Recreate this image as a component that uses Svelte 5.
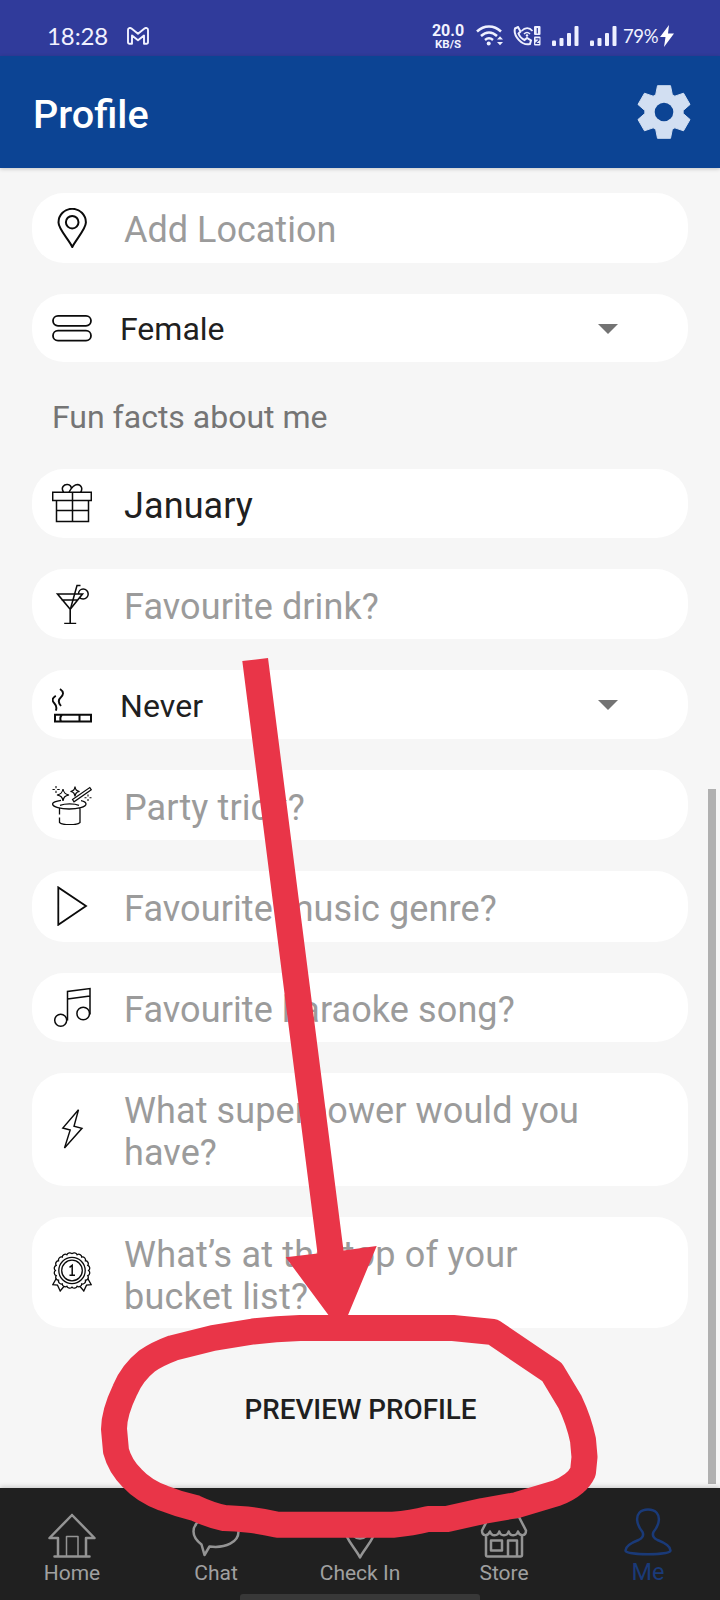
<script>
  const fields = [
    { icon: 'pin', text: 'Add Location', height: 70 },
    { icon: 'bars', text: 'Female', select: true, height: 68 },
  ];
  const facts = [
    { icon: 'gift', text: 'January', filled: true, height: 69 },
    { icon: 'drink', text: 'Favourite drink?', height: 70 },
    { icon: 'smoke', text: 'Never', select: true, height: 69 },
    { icon: 'hat', text: 'Party trick?', height: 70 },
    { icon: 'play', text: 'Favourite music genre?', height: 71 },
    { icon: 'note', text: 'Favourite karaoke song?', height: 69 },
    { icon: 'bolt', text: 'What superpower would you have?', height: 113 },
    { icon: 'medal', text: 'What’s at the top of your bucket list?', height: 111, wide: true },
  ];
  const tabs = ['Home', 'Chat', 'Check In', 'Store', 'Me'];

  const tooth = [[-8.3, -17.3], [-6.5, -26.3], [6.5, -26.3], [8.3, -17.3]];
  const gear = [0, 60, 120, 180, 240, 300]
    .flatMap((deg) => {
      const a = (deg * Math.PI) / 180;
      return tooth.map(([x, y]) => `${(x * Math.cos(a) - y * Math.sin(a)).toFixed(2)},${(x * Math.sin(a) + y * Math.cos(a)).toFixed(2)}`);
    })
    .join(' ');

  // Scalloped rim of the medal
  const rim = (() => {
    let d = '';
    for (let i = 0; i <= 20; i++) {
      const a = (i * 18 * Math.PI) / 180;
      const x = (20 + 16.6 * Math.sin(a)).toFixed(2);
      const y = (18.5 - 16.6 * Math.cos(a)).toFixed(2);
      d += i ? `A3 3 0 0 1 ${x} ${y}` : `M${x} ${y}`;
    }
    return d;
  })();
</script>

{#snippet fieldIcon(name)}
  <svg class="icon" viewBox="0 0 40 40" width="40" height="40">
    {#if name === 'pin'}
      <path stroke-width="2" d="M20.3 39C17 32 6.500 21 6.500 14.500a13.700 13.700 0 0 1 27.400 0C33.900 21 23.500 32 20.300 39z" /><circle stroke-width="2" cx="20.200" cy="14.200" r="6.300" />
    {:else if name === 'bars'}
      <rect stroke-width="1.800" x="1" y="7.800" width="38" height="10" rx="5" /><rect stroke-width="1.800" x="1" y="22.700" width="38" height="10" rx="5" />
    {:else if name === 'gift'}
      <path d="M.7 9.300h38.600v8.200H.7zM4.500 17.500V38.500h32V17.500M20.500 9.300v29.200M4.500 27.500h32M11.500 9C8.500 4.500 12 1.200 15.500 1.500c2.500.3 3.800 2 3.800 4M17 9c2-3.500 5.500-7.500 8.500-7.500 4 .2 5.500 4.500 3 7.800" />
    {:else if name === 'drink'}
      <path d="M5.500 10h25L18.200 25.300zM9.500 16h16.500M18.200 25.300V39.500M12.200 39.500h12" stroke-width="1.600" /><path d="M18.700 24L25 1.500h3.500" stroke-width="1.500" /><path d="M26.500 10c0-2.800 2-5 4.700-5a5 5 0 0 1 0 10c-1.700 0-2.900-.5-3.700-1.500" stroke-width="1.500" />
    {:else if name === 'smoke'}
      <path stroke-width="2" d="M3 30.800h36v6.700H3zM10 30.800c-2 2-2 4.500-1 6.700M27.500 30.800v6.700" /><path d="M3.800 11.700C-.5 14.500 0 17 2.500 19.500c2.300 2.500 2.200 5 1.300 7.200M8 5c4.500 3 3.300 6 .7 8.500-3 2.700-2.300 5.500.3 8.500" stroke-width="1.900" />
    {:else if name === 'hat'}
      <path d="M9 15.300c-5 .7-8.700 2.200-8.400 3.900.4 2.900 8 4.800 16.500 4.800S34 22 34 19c0-1.500-2-2.600-5-3.300M8 20.300c5-2 14.500-2 19 0M7.500 23.500v6M7.500 32.500V37.500c3 3 17.500 3 20.500 0V23.500" stroke-width="1.300" />
      <path d="M11 4c.7 4 2 5.300 6 6-4 .8-5.300 2-6 6-.7-4-2-5.200-6-6 4-.7 5.300-2 6-6zM23 1.500c.5 3.400 1.400 4.200 4.500 5-3.100.8-4 1.600-4.500 5-.5-3.400-1.400-4.200-4.500-5 3.100-.8 4-1.600 4.500-5z" stroke-width="1.200" /><path fill="#fff" d="M20.500 14.500L37.800 2.500l1.500 2.300L22 16.800z" stroke-width="1.200" />
      <path d="M4 1v2.200M4 5.800V8M.5 4.500H2.800M5.200 4.500h2.500M36 9.500v2M36 14v2M32.500 12.800h2M37.500 12.800h2" stroke-width="1.100" />
    {:else if name === 'play'}
      <path stroke-width="1.800" d="M6.300 1.400v37.400L34 20z" />
    {:else if name === 'note'}
      <path d="M15.500 33.500V4.500l22.500-3v26M15.500 12l22.500-3" /><circle cx="8.700" cy="33.200" r="6" /><circle cx="31.200" cy="26.500" r="6.300" />
    {:else if name === 'bolt'}
      <path stroke-width="1.400" d="M26.500.8L10.800 19l7.400 2L12.500 39 30 19.300l-8-2z" />
    {:else if name === 'medal'}
      <path d="M4.500 26L.8 32.700l4.700.5 2.700 5.800L14 32M35.500 26l3.700 6.700-4.700.5-2.700 5.800L26 32" stroke-width="1.300" />
      <path d={rim} fill="#fff" stroke-width="1.300" /><circle cx="20" cy="18.500" r="13.200" stroke-width="1.300" /><circle cx="20" cy="18.500" r="10.300" stroke-width="1.300" />
      <path d="M17.500 15.300l2.700-2V23M17.500 23.200h5.500" stroke-width="1.500" />
    {/if}
  </svg>
{/snippet}

{#snippet field(f)}
  <div class="field" class:select={f.select} class:filled={f.filled} class:wide={f.wide} style:height="{f.height}px">
    {@render fieldIcon(f.icon)}
    <span class="value">{f.text}</span>
    {#if f.select}
      <svg class="caret" width="20" height="10" viewBox="0 0 20 10"><path d="M0 0h20L10 10z" /></svg>
    {/if}
  </div>
{/snippet}

{#snippet signal()}
  <svg width="27" height="21" viewBox="0 0 27 21" fill="#eef0ff"><rect x="0" y="14.500" width="4" height="5.500" rx="1" /><rect x="7.500" y="12" width="4" height="8" rx="1" /><rect x="15" y="7" width="4" height="13" rx="1" /><rect x="22.500" y="0" width="4" height="20" rx="1" /></svg>
{/snippet}

<div class="screen">
  <div class="status">
    <span class="time">18:28</span>
    <svg class="mail" width="22" height="18" viewBox="0 0 22 18"><path d="M1 3v12.500q0 1.200 1.200 1.200H5V8.500l6 4.800 6-4.800v8.200h2.800q1.200 0 1.200-1.200V3c0-2-2-2.600-3.500-1.500L11 6.700 4.500 1.500C3 .4 1 1 1 3z" /></svg>
    <div class="right">
      <div class="speed"><b>20.0</b><b class="unit">KB/S</b></div>
      <svg class="wifi" width="28" height="22" viewBox="0 0 28 22" fill="none" stroke="#eef0ff" stroke-width="2.500"><path d="M1 6.500C8-.2 18-.2 25 6.500M5 11c5-4.600 11-4.600 16 0M9 15c2.600-2.200 5.400-2.200 8 0" /><circle cx="12.700" cy="18.500" r="2" fill="#eef0ff" stroke="none" /><path d="M21 14.500l3-3.300 3 3.300zM21 17l3 3.300 3-3.300z" fill="#eef0ff" stroke="none" /></svg>
      <svg class="call" width="28" height="20" viewBox="0 0 28 20" fill="none" stroke="#eef0ff" stroke-width="2"><path d="M2 2.500l3-1.500 2.500 4.500L5.500 7.500c1 3 3 5 6 6.500l2.500-2 4 2.500-1 3.500c-8 2-17-8-15-15.500z" /><path d="M8.500 5c3.500-3.800 8-3.800 11 0M11 8c2-2 4-2 6 0" stroke-width="1.600" /><circle cx="14" cy="9.500" r="1.200" fill="#eef0ff" stroke="none" /><rect x="21" y="0" width="6.500" height="9" rx="1" fill="#eef0ff" stroke="none" /><rect x="21" y="10.500" width="6.500" height="9" rx="1" fill="#eef0ff" stroke="none" /><path d="M24.300 2v5.500M22.500 12.800h3.400v1.300l-3 2.800v.6h3.300" stroke="#303b98" stroke-width="1.200" /></svg>
      <div class="sig1">{@render signal()}</div>
      <div class="sig2">{@render signal()}</div>
      <span class="battery">79%</span>
      <svg class="charge" width="14" height="22" viewBox="0 0 14 22"><path d="M9 0L0 12h5.500L4 22 14 8.500H8z" fill="#fff" /></svg>
    </div>
  </div>

  <header>
    <h1>Profile</h1>
    <svg class="gear" width="56" height="56" viewBox="-28 -28 56 56">
      <polygon points={gear} fill="#d2dff2" stroke="#d2dff2" stroke-width="1" stroke-linejoin="round" />
      <circle r="9.300" fill="#0c4494" />
    </svg>
  </header>

  <main>
    <div class="stack first">
      {#each fields as f}{@render field(f)}{/each}
    </div>
    <h2>Fun facts about me</h2>
    <div class="stack">
      {#each facts as f}{@render field(f)}{/each}
    </div>
    <button>PREVIEW PROFILE</button>
    <div class="scrollbar"></div>
  </main>

  <nav>
    {#each tabs as tab}
      <div class="tab" class:active={tab === 'Me'}>
        <svg width="48" height="48" viewBox="0 0 48 48">
          {#if tab === 'Home'}
            <path d="M24 3L1.500 26H10v18.500H6.500M24 3l22.500 23H38v18.500h3.500M7 44.500h34" /><path d="M18.500 44V24.500H30V44" stroke-width="1.500" />
          {:else if tab === 'Chat'}
            <path d="M24 4C11 4 1.500 11 1.500 19.500c0 6 3.500 9.500 8 13L12.500 43l5-8.500C34 36.500 46.500 30 46.500 19.500 46.500 11 37 4 24 4z" />
          {:else if tab === 'Check In'}
            <path d="M24 45.500C20 37 8.500 26 8.500 17a15.500 15.500 0 0 1 31 0C39.500 26 28 37 24 45.500z" /><circle cx="24" cy="18" r="8.500" />
          {:else if tab === 'Store'}
            <path d="M9 5h30l7 13.500c0 6-6.500 6-8 1-1.500 5-8 5-9.300 0-1.500 5-8 5-9.400 0-1.500 5-8 5-9.300 0-2 5-8 5-8-1zM6 24v19q0 1.500 1.500 1.500h33q1.500 0 1.500-1.500V24M11 28.500h11v10H11zM28 44V28.500h9V44" />
          {:else}
            <path d="M24 1.500c-8 0-11.500 5-10.800 11 .4 5 2.500 8 5.300 11.500 1.800 4-.5 6.300-4 8C8 34.500 1.500 38 1.500 42.500c0 5 45 5 45 0C46.500 38 40 34.500 33.500 32c-3.500-1.700-5.800-4-4-8 2.800-3.500 4.900-6.500 5.300-11.500.7-6-2.800-11-10.800-11z" />
          {/if}
        </svg>
        <span>{tab}</span>
      </div>
    {/each}
    <div class="handle"></div>
  </nav>

  <svg class="marker" width="720" height="1600" viewBox="0 0 720 1600">
    <path fill="#e93548" d="M242.300 661L268 658 343.500 1250.500 376.700 1246 341 1332 285.700 1257.300 317.500 1253.500z" />
    <path fill="none" stroke="#e93548" stroke-width="26" stroke-linejoin="round" d="M300 1328Q275 1329 253 1331.500L213 1338 173 1348Q157 1354 147 1361Q132 1373 125 1390Q114 1413 114 1429L116 1451Q120 1466 132 1478Q144 1491 163 1498Q178 1504 195 1508Q210 1515 224 1518Q236 1518.500 247 1519.500Q262 1521 277 1524.700H393Q412 1523 428 1519H447L483 1511 517 1505 557 1493Q577 1485 583 1472L584.500 1457 583 1440Q579 1421 570 1402L552 1372 493 1332 453 1328z" />
  </svg>
</div>

<style>
  :global(body) { background: #f6f6f6; }
  .screen { position: relative; width: 720px; height: 1600px; overflow: hidden; display: flex; flex-direction: column; background: #f6f6f6; font-family: Roboto, sans-serif; }
  .status { height: 56px; flex: none; box-sizing: border-box; padding: 16px 46px 0 47px; display: flex; align-items: center; background: #303b9b; color: #f1f2ff; }
  .time { font: 24px/40px Lato, sans-serif; letter-spacing: -.1px; }
  .mail { margin-left: 18.500px; fill: none; stroke: #f1f2ff; stroke-width: 1.900; stroke-linejoin: round; }
  .right { display: flex; align-items: center; margin-left: auto; }
  .speed { display: flex; flex-direction: column; align-items: center; width: 34px; line-height: 15px; font-size: 16px; }
  .unit { font-size: 11.500px; line-height: 12px; }
  .wifi { margin-left: 11px; }
  .call { margin-left: 9px; }
  .sig1 { display: flex; margin-left: 11px; }
  .sig2 { display: flex; margin-left: 11px; }
  .battery { width: 34px; margin-left: 6px; font: 18.500px/24px Lato, sans-serif; letter-spacing: -.4px; white-space: nowrap; }
  .charge { margin-left: 3px; }
  header { height: 112px; flex: none; box-sizing: border-box; padding: 0 28px 0 33px; display: flex; align-items: center; justify-content: space-between; background: #0c4494; box-shadow: 0 1px 4px #0003; }
  h1 { margin: 4px 0 0; color: #fff; font-size: 39.600px; font-weight: 500; }
  main { position: relative; flex: 1; padding: 25px 32px 0; display: flex; flex-direction: column; }
  .stack { display: flex; flex-direction: column; gap: 31px; }
  .field { box-sizing: border-box; flex: none; padding: 0 68px 0 20px; border-radius: 32px; background: #fff; display: flex; align-items: center; }
  .icon { flex: none; margin-top: -1px; fill: none; stroke: #0b0b0b; stroke-width: 1.500; }
  .value { flex: 1; margin-left: 32px; padding-top: 5px; font-size: 36px; line-height: 42px; letter-spacing: .1px; color: #9b9b9b; }
  .first .value { padding-top: 4px; letter-spacing: 0; }
  .wide .value { padding-top: 6px; letter-spacing: .22px; }
  .filled .value { color: #202020; }
  .select .value { margin-left: 28px; padding-top: 2px; font-size: 32px; color: #202020; }
  .caret { fill: #737373; margin: 1px 2px 0 0; }
  h2 { margin: 0 0 0 20px; height: 107px; line-height: 111px; font-size: 32px; font-weight: 400; color: #757575; }
  button { width: 100%; height: 96px; margin-top: 34px; padding: 0 0 0 1px; border: 0; background: none; font: 500 27.800px/96px Roboto, sans-serif; color: #1f1f1f; text-align: center; }
  .scrollbar { position: absolute; right: 4px; top: 621px; width: 8px; height: 695px; background: #b0b0b0; }
  nav { position: relative; flex: none; height: 112px; display: grid; grid-template-columns: repeat(5, 1fr); background: #202020; box-shadow: 0 -1px 5px #0003; }
  .tab { display: flex; flex-direction: column; align-items: center; padding-top: 24px; color: #a0a0a0; font-size: 21px; line-height: 24px; }
  .tab svg { display: block; margin-top: 0; fill: none; stroke: #949494; stroke-width: 2.500; stroke-linejoin: round; stroke-linecap: round; }
  .tab span { margin-top: 1px; white-space: nowrap; }
  .tab.active { color: #1a3a78; font-size: 23.500px; }
  .tab.active svg { margin-top: -4px; stroke: #1a3a78; }
  .tab.active span { margin-top: 4px; }
  .handle { position: absolute; left: 240px; bottom: 0; width: 240px; height: 6px; border-radius: 3px 3px 0 0; background: #383838; }
  .marker { position: absolute; left: 0; top: 0; pointer-events: none; }
</style>
